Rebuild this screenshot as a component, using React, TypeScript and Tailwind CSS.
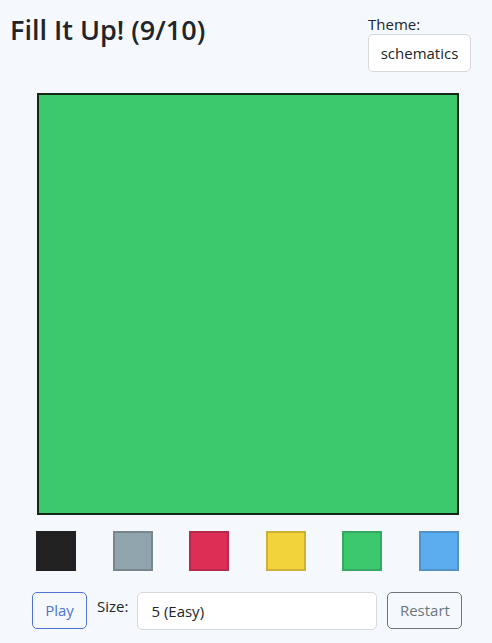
import React from 'react';

const swatches = [
  { bg: 'bg-[#212121]', border: 'border-[#212121]' },
  { bg: 'bg-[#90a4ae]', border: 'border-[#78868d]' },
  { bg: 'bg-[#dd2e56]', border: 'border-[#b72a4b]' },
  { bg: 'bg-[#f2d33b]', border: 'border-[#cdb034]' },
  { bg: 'bg-[#3cc96e]', border: 'border-[#36a862]' },
  { bg: 'bg-[#5badf0]', border: 'border-[#5491c5]' },
];

export default function App() {
  return (
    <div className="w-[492px] h-[643px] bg-[#f5f9fd] text-[#212529] overflow-hidden" style={{ fontFamily: '"Open Sans", "Noto Sans", sans-serif' }}>
      <div className="flex justify-between items-start pl-[10px] pr-[21px] pt-[13px]">
        <h1 className="text-[27px] font-semibold leading-[36px] mt-[-1px]">Fill It Up! (9/10)</h1>
        <div className="flex flex-col">
          <label className="text-[15px] leading-[20px] pt-[1px]">Theme:</label>
          <div className="h-[38px] w-[103px] bg-white border border-[#d5d9de] rounded-[5px] flex items-center justify-center text-[15px]">
            schematics
          </div>
        </div>
      </div>

      <div className="mt-[21px] ml-[37px] w-[422px] h-[422px] bg-[#3cc96e] border-2 border-[#14251a]" />

      <div className="mt-[16px] ml-[36px] w-[423px] flex justify-between">
        {swatches.map((s, i) => (
          <div key={i} className={`w-[40px] h-[40px] border-2 ${s.bg} ${s.border}`} />
        ))}
      </div>

      <div className="mt-[21px] ml-[32px] flex items-start">
        <button className="h-[37px] w-[55px] border border-[#4f74d4] rounded-[5px] text-[#4f74d4] text-[15px]">Play</button>
        <span className="ml-[10px] mt-[3px] text-[15px]">Size:</span>
        <div className="ml-[9px] h-[38px] w-[240px] bg-white border border-[#d5d9de] rounded-[5px] flex items-center px-[13px] text-[15px]">
          5 (Easy)
        </div>
        <button className="ml-[10px] h-[37px] w-[75px] border border-[#6c757d] rounded-[5px] text-[#6c757d] text-[15px]">Restart</button>
      </div>
    </div>
  );
}
